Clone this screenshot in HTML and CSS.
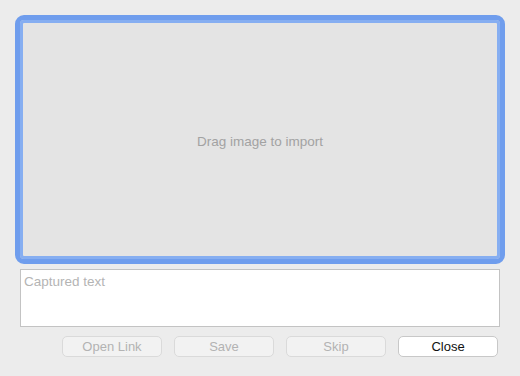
FILE: index.html
```html
<!DOCTYPE html>
<html>
<head>
  <meta charset="utf-8">
  <title>Import</title>
  <link rel="stylesheet" href="styles.css">
</head>
<body>
  <div class="window">
    <div class="drop-zone">
      <span class="drop-hint">Drag image to import</span>
    </div>
    <textarea class="captured" placeholder="Captured text"></textarea>
    <div class="actions">
      <button type="button" disabled>Open Link</button>
      <button type="button" disabled>Save</button>
      <button type="button" disabled>Skip</button>
      <button type="button" class="primary">Close</button>
    </div>
  </div>
</body>
</html>
```

FILE: styles.css
```css
body {
  margin: 0;
  background-color: #ececec;
  font-family: "Liberation Sans", Arial, sans-serif;
  font-size: 13px;
}

.window {
  width: 520px;
  height: 376px;
  box-sizing: border-box;
  padding: 15px;
}

.drop-zone {
  box-sizing: border-box;
  width: 490px;
  height: 249px;
  padding-top: 4px;
  display: flex;
  align-items: center;
  justify-content: center;
  background-color: #e4e4e4;
  border: 5px solid #6f9ded;
  border-radius: 9px;
  box-shadow: inset 0 0 0 3px #86aef1;
}

.drop-hint {
  color: #a2a2a2;
  font-size: 13.5px;
}

.captured {
  display: block;
  box-sizing: border-box;
  width: 480px;
  height: 58px;
  margin: 5px 5px 0;
  padding: 4px 3px;
  background-color: #fff;
  border: 1px solid #c3c3c3;
  font-family: inherit;
  font-size: 13.5px;
  resize: none;
  outline: none;
}

.captured::placeholder {
  color: #b4b4b4;
}

.actions {
  display: flex;
  justify-content: flex-end;
  gap: 12px;
  margin-top: 9px;
  padding-right: 7px;
}

button {
  box-sizing: border-box;
  width: 100px;
  height: 21px;
  padding: 0;
  font-family: inherit;
  font-size: 13px;
  border-radius: 5px;
  border: 1px solid #c8c8c8;
  background-color: #fff;
  color: #111;
}

button:disabled {
  background-color: #f2f2f2;
  border-color: #dadada;
  color: #b3b3b3;
}
```
